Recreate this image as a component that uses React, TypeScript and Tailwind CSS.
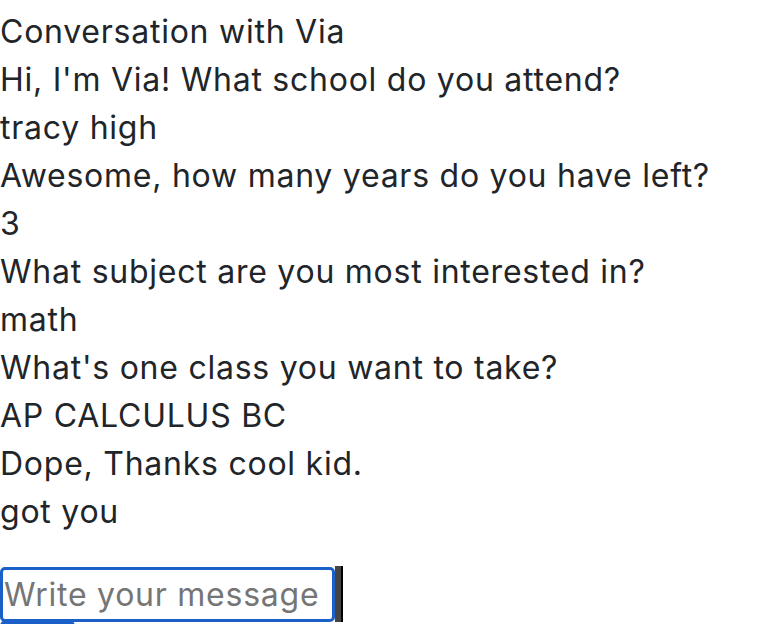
const messages = [
  'Conversation with Via',
  "Hi, I'm Via! What school do you attend?",
  'tracy high',
  'Awesome, how many years do you have left?',
  '3',
  'What subject are you most interested in?',
  'math',
  "What's one class you want to take?",
  'AP CALCULUS BC',
  'Dope, Thanks cool kid.',
  'got you',
];

const App = () => {
  return (
    <div className="min-h-screen bg-white pt-2 text-[#212529]" style={{ fontFamily: 'Inter, "Noto Sans", sans-serif' }}>
      <div className="flex flex-col">
        {messages.map((m, i) => (
          <div key={i} className="text-[32px] leading-[48px] whitespace-nowrap tracking-[0.75px]">
            {m}
          </div>
        ))}
      </div>

      <div className="mt-[31px] flex items-stretch">
        <input
          type="text"
          placeholder="Write your message"
          className="w-[335px] h-[55px] rounded-[5px] border-[3px] border-[#1b5fc9] bg-white px-[1px] text-[32px] tracking-[0.75px] text-[#212529] outline-none placeholder:text-[#757575]"
        />
        <button className="w-[8px] h-[56px] -mt-[1px] bg-[#444] border-r-2 border-black" />
      </div>
      <div className="-mt-[2px] h-[20px] w-[75px] rounded-[6px] bg-[#1b5fc9]" />
    </div>
  );
};

export default App;
